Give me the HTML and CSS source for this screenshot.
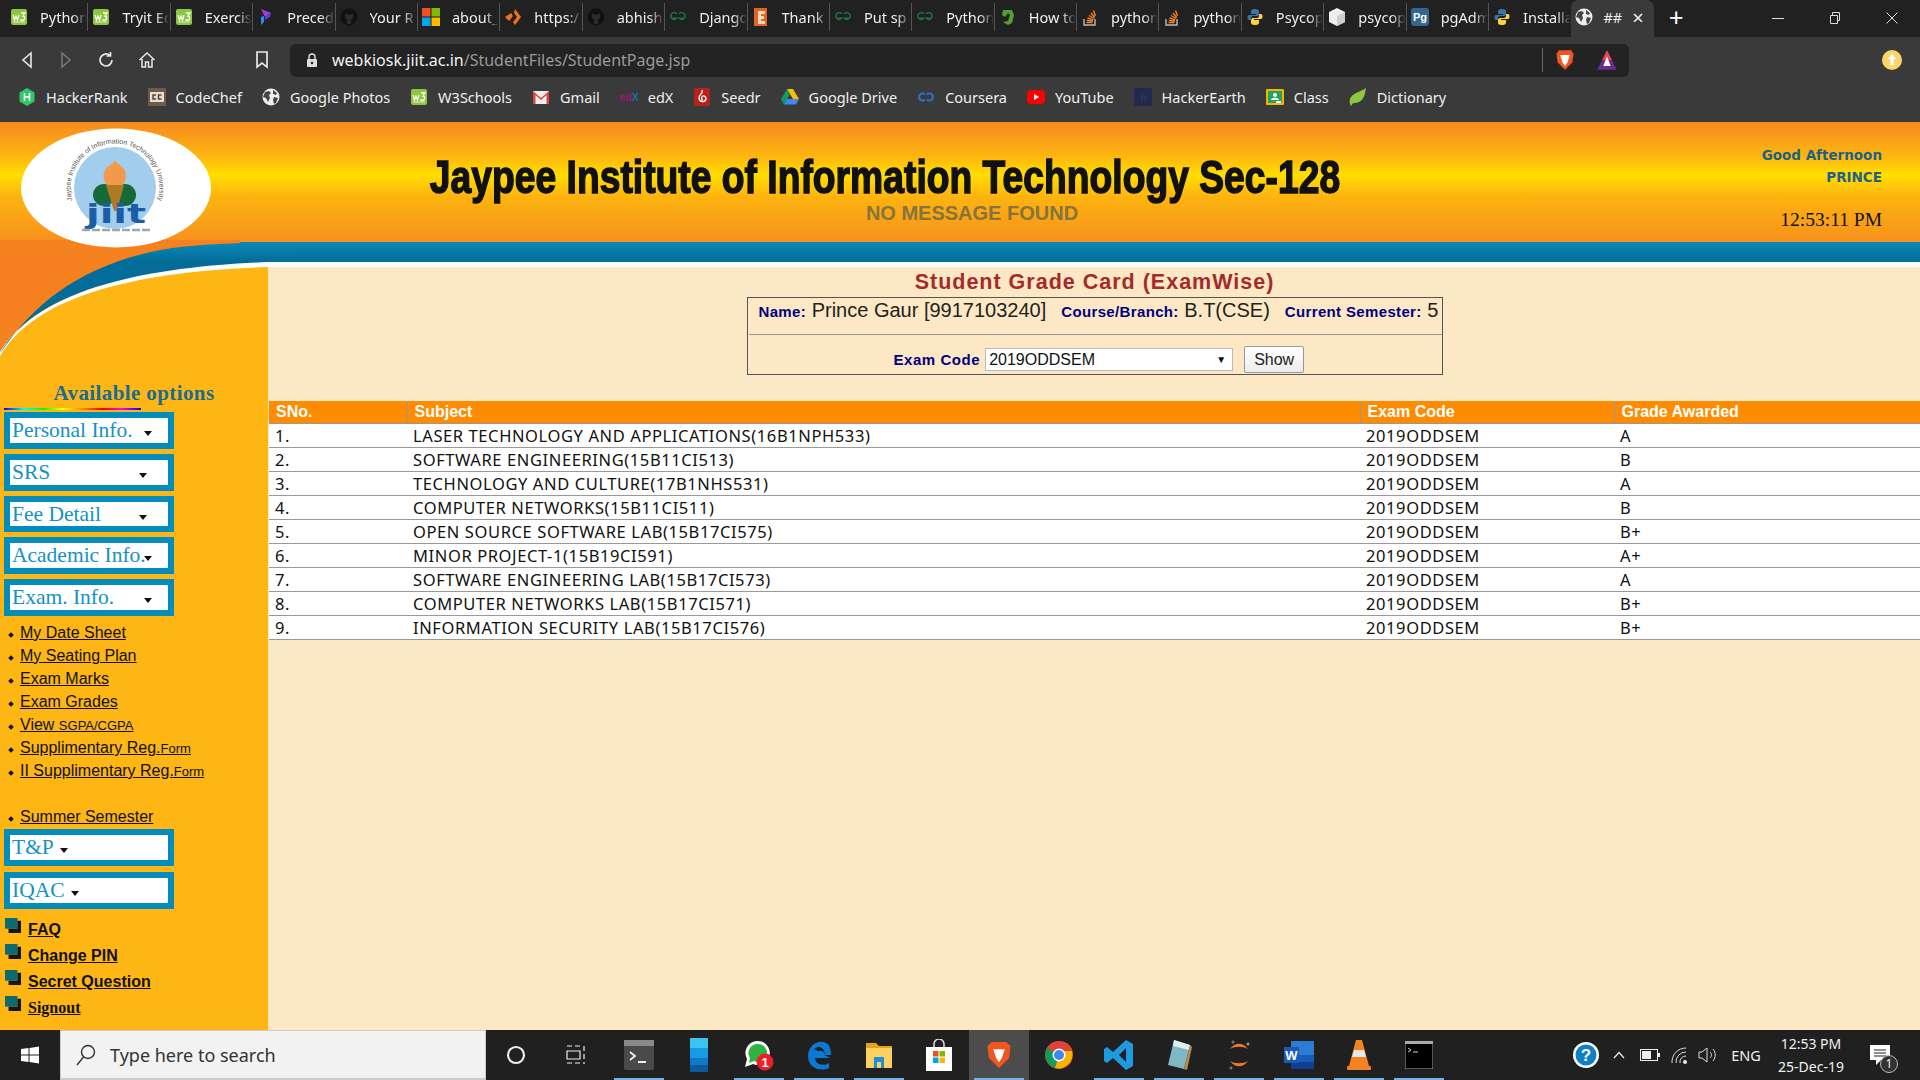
FILE: index.html
```html
<!DOCTYPE html>
<html lang="en">
<head>
    <meta charset="UTF-8">
    <title>Student Page</title>
    <link rel="stylesheet" href="styles.css">
</head>
<body>

<svg class="defs" width="0" height="0">
    <symbol id="i-w3" viewBox="0 0 18 18"><rect x="1" y="1" width="16" height="16" rx="2" fill="#8cc63f"/><path d="M3 7l1.500 5 1.500-4 1.500 4 1.500-5" fill="none" stroke="#fff" stroke-width="1.200"/><path d="M11 5h4l-2 3c2 0 2.500 4-.5 4.500-1 0-1.500-.5-2-1" fill="none" stroke="#fff" stroke-width="1.300"/><path d="M3 14h12" stroke="#fff" stroke-width=".7"/></symbol>
    <symbol id="i-prec" viewBox="0 0 18 18"><path d="M4 1l10 4-6 4z" fill="#a93ae0"/><path d="M8 9l6-4-1 4-5 3z" fill="#5b3ce0"/><path d="M4 9v8l3-3V8z" fill="#2a8fe8"/></symbol>
    <symbol id="i-gh" viewBox="0 0 18 18"><circle cx="9" cy="9" r="8.500" fill="#111"/><path d="M5 5l2 1.500h4L13 5v4c0 2-1.500 3-4 3s-4-1-4-3zM7 12v4h4v-4z" fill="#2c2c2c"/></symbol>
    <symbol id="i-ms" viewBox="0 0 18 18"><rect x="0" y="0" width="8.500" height="8.500" fill="#f25022"/><rect x="9.500" y="0" width="8.500" height="8.500" fill="#7fba00"/><rect x="0" y="9.500" width="8.500" height="8.500" fill="#00a4ef"/><rect x="9.500" y="9.500" width="8.500" height="8.500" fill="#ffb900"/></symbol>
    <symbol id="i-kite" viewBox="0 0 18 18"><path d="M11 1l6 8-6 8-2-3 4-5-3-4zM7 5l2 3-4 5-4-4z" fill="#f2711c"/></symbol>
    <symbol id="i-gg" viewBox="0 0 18 18"><path d="M8 6C7 4 3 4 2 7c-1 4 4 6 6 3H4M10 6c1-2 5-2 6 1 1 4-4 6-6 3h4" fill="none" stroke="#1b7f46" stroke-width="1.200"/></symbol>
    <symbol id="i-e" viewBox="0 0 18 18"><rect x="2" y="0" width="13" height="18" fill="#e2622a"/><path d="M6 3h7v3H9v2h3v3H9v2h4v3H6z" fill="#f6dcb4"/></symbol>
    <symbol id="i-how" viewBox="0 0 18 18"><path d="M4 2h9l2 5-2 8-4 2-5-3 5-1 2-6-2-2-3 4-3-2z" fill="#5a9e2f"/></symbol>
    <symbol id="i-so" viewBox="0 0 18 18"><path d="M3 11v6h11v-6" fill="none" stroke="#bcbbbb" stroke-width="1.400"/><path d="M5.500 14.500h6M5.800 12.400l6 .6M6.500 10l5.700 1.800M8 7.500l5 3M10 5l3.700 4.500M12.500 2.500l2 5.500" stroke="#f48024" stroke-width="1.400"/></symbol>
    <symbol id="i-py" viewBox="0 0 18 18"><path d="M9 1C5 1 5 3 5 4v2h5v1H3C1 7 1 12 3 12h2v-2c0-1 1-2 2-2h4c1 0 2-1 2-2V3c0-1-1-2-4-2z" fill="#3776ab"/><path d="M9 17c4 0 4-2 4-3v-2H8v-1h7c2 0 2-5 0-5h-2v2c0 1-1 2-2 2H7c-1 0-2 1-2 2v3c0 1 1 2 4 2z" fill="#ffd43b"/></symbol>
    <symbol id="i-cube" viewBox="0 0 18 18"><path d="M9 0l8 4v10l-8 4-8-4V4z" fill="#eee"/><path d="M9 8l8-4v10l-8 4z" fill="#cfcfcf"/></symbol>
    <symbol id="i-globe" viewBox="0 0 18 18"><circle cx="9" cy="9" r="8.500" fill="#eee"/><path d="M3 4l4-1 2 2-2 2 1 3-2 4-2-4-3-1zM11 2l4 3-1 2-3-1zM12 9l4 1-2 5-2 1-1-4z" fill="#444"/></symbol>
    <symbol id="i-hr" viewBox="0 0 18 18"><path d="M9 0l7.500 4.500v9L9 18l-7.500-4.500v-9z" fill="#2ec866"/><path d="M6.500 5v8M11.500 5v8M6.500 9h5" stroke="#fff" stroke-width="1.600"/></symbol>
    <symbol id="i-cc" viewBox="0 0 18 18"><rect x="0" y="0" width="18" height="18" fill="#6f5b48"/><rect x="2" y="4" width="14" height="10" fill="#e4ded6"/><path d="M8 7H5v4h3M13.500 7h-3v4h3" fill="none" stroke="#5b4636" stroke-width="1.500"/></symbol>
    <symbol id="i-gmail" viewBox="0 0 18 18"><rect x="1" y="3" width="16" height="13" fill="#eee"/><path d="M1 16V3l8 7 8-7v13h-2.500V7L9 12 3.500 7v9z" fill="#d9483b"/></symbol>
    <symbol id="i-seedr" viewBox="0 0 18 18"><rect x="1" y="0" width="16" height="18" rx="2" fill="#b7231b"/><path d="M9 2c2 3-3 4-3 8 0 4 6 5 7 1 0-3-3-4-4-2-1 1 0 3 1 3" fill="none" stroke="#fff" stroke-width="1.300"/></symbol>
    <symbol id="i-drive" viewBox="0 0 18 18"><path d="M6 1h6l6 10h-6z" fill="#fbbc04"/><path d="M6 1l3 5-6 10.500-3-5.500z" fill="#0f9d58"/><path d="M3 16.500L6 11h12l-3 5.500z" fill="#4285f4"/></symbol>
    <symbol id="i-coursera" viewBox="0 0 18 18"><path d="M8 6.500a3.500 3.500 0 1 0 0 5M10 6.500a3.500 3.500 0 1 1 0 5" fill="none" stroke="#2a73cc" stroke-width="2"/></symbol>
    <symbol id="i-yt" viewBox="0 0 18 18"><rect x="0" y="2" width="18" height="14" rx="4" fill="#f00"/><path d="M7 6l5 3-5 3z" fill="#fff"/></symbol>
    <symbol id="i-he" viewBox="0 0 18 18"><rect x="0" y="0" width="18" height="18" fill="#23294a"/><path d="M8 5v9M11 8v6" stroke="#2f3a66"/></symbol>
    <symbol id="i-class" viewBox="0 0 18 18"><rect x="0" y="1" width="18" height="16" rx="1" fill="#f4b400"/><rect x="2" y="3" width="14" height="12" fill="#26a35a"/><circle cx="9" cy="7" r="2" fill="#fff"/><path d="M5 12c0-3 8-3 8 0z" fill="#fff"/><rect x="10" y="13" width="5" height="2" fill="#fff"/></symbol>
    <symbol id="i-leaf" viewBox="0 0 18 18"><path d="M17 0C16 6 15 15 5 15c-1 0-2 1-3 3-1-1-2-4-1-7 2-6 10-7 16-11z" fill="#8dc63f"/></symbol>
    <symbol id="i-brave" viewBox="0 0 18 18"><path d="M4 1h10l2 3-1 7-6 6-6-6-1-7z" fill="#f1561f"/><path d="M5 5h8l-2 6-2 3-2-3z" fill="#fff"/></symbol>
    <symbol id="i-bat" viewBox="0 0 18 18"><path d="M9 1l8 16H1z" fill="#6b2c8f"/><path d="M9 1l4 8H5z" fill="#ef4056"/><path d="M9 6l3 8H6z" fill="#fff"/></symbol>
    <symbol id="i-bullet" viewBox="0 0 18 18"><rect x="0" y="0" width="14" height="12" fill="#0d6a70"/><path d="M14 3h4v14H4v-5h10z" fill="#151515"/></symbol>
</svg>

<div class="tabstrip">
    <div class="tab"><svg class="fav"><use href="#i-w3"/></svg><span>Python</span></div>
    <div class="tab"><svg class="fav"><use href="#i-w3"/></svg><span>Tryit Ed</span></div>
    <div class="tab"><svg class="fav"><use href="#i-w3"/></svg><span>Exercis</span></div>
    <div class="tab"><svg class="fav"><use href="#i-prec"/></svg><span>Preced</span></div>
    <div class="tab"><svg class="fav"><use href="#i-gh"/></svg><span>Your R</span></div>
    <div class="tab"><svg class="fav"><use href="#i-ms"/></svg><span>about_</span></div>
    <div class="tab"><svg class="fav"><use href="#i-kite"/></svg><span>https:/</span></div>
    <div class="tab"><svg class="fav"><use href="#i-gh"/></svg><span>abhish</span></div>
    <div class="tab"><svg class="fav"><use href="#i-gg"/></svg><span>Django</span></div>
    <div class="tab"><svg class="fav"><use href="#i-e"/></svg><span>Thank</span></div>
    <div class="tab"><svg class="fav"><use href="#i-gg"/></svg><span>Put sp</span></div>
    <div class="tab"><svg class="fav"><use href="#i-gg"/></svg><span>Python</span></div>
    <div class="tab"><svg class="fav"><use href="#i-how"/></svg><span>How to</span></div>
    <div class="tab"><svg class="fav"><use href="#i-so"/></svg><span>python</span></div>
    <div class="tab"><svg class="fav"><use href="#i-so"/></svg><span>python</span></div>
    <div class="tab"><svg class="fav"><use href="#i-py"/></svg><span>Psycop</span></div>
    <div class="tab"><svg class="fav"><use href="#i-cube"/></svg><span>psycop</span></div>
    <div class="tab"><svg class="fav" viewBox="0 0 18 18"><rect width="18" height="18" rx="3" fill="#336791"/><text x="9" y="12.500" text-anchor="middle" class="svg-pg">Pg</text></svg><span>pgAdm</span></div>
    <div class="tab"><svg class="fav"><use href="#i-py"/></svg><span>Installa</span></div>
    <div class="tab tab-active"><svg class="fav"><use href="#i-globe"/></svg><span>##</span><b class="tab-x">&#215;</b></div>
    <div class="tab-new">+</div>
    <div class="winctl">
        <svg width="12" height="12" viewBox="0 0 12 12"><path d="M0 6.500h12" stroke="#ddd"/></svg>
        <svg width="12" height="12" viewBox="0 0 12 12"><path d="M1.500 3.500h7v8h-7zM3.500 3.500v-3h7v8h-2" fill="none" stroke="#ddd"/></svg>
        <svg width="12" height="12" viewBox="0 0 12 12"><path d="M.5.500l11 11M11.500.500l-11 11" stroke="#ddd"/></svg>
    </div>
</div>

<div class="toolbar">
    <div class="nav-btns">
        <svg width="16" height="18" viewBox="0 0 16 18"><path d="M12 2L4 9l8 7z" fill="none" stroke="#e8e8e8" stroke-width="1.600"/></svg>
        <svg width="16" height="18" viewBox="0 0 16 18"><path d="M4 2l8 7-8 7z" fill="none" stroke="#777" stroke-width="1.600"/></svg>
        <svg width="18" height="18" viewBox="0 0 18 18"><path d="M15 9a6 6 0 1 1-2-4.500M13.500 1v4h-4" fill="none" stroke="#e8e8e8" stroke-width="1.700"/></svg>
        <svg width="18" height="18" viewBox="0 0 18 18"><path d="M1.500 9L9 2l7.500 7M4 8v8h3.500v-5h3v5H14V8" fill="none" stroke="#e8e8e8" stroke-width="1.500"/></svg>
    </div>
    <svg class="star" width="14" height="18" viewBox="0 0 14 18"><path d="M2 1h10v15l-5-4-5 4z" fill="none" stroke="#e8e8e8" stroke-width="1.700"/></svg>
    <div class="address">
        <svg class="lock" width="12" height="15" viewBox="0 0 12 15"><path d="M3 6V4a3 3 0 0 1 6 0v2" fill="none" stroke="#ddd" stroke-width="1.400"/><rect x="1" y="6" width="10" height="8" rx="1" fill="#ddd"/><circle cx="6" cy="10" r="1.300" fill="#222"/></svg>
        <span class="url"><b>webkiosk.jiit.ac.in</b>/StudentFiles/StudentPage.jsp</span>
        <i class="addr-sep"></i>
        <svg class="fav addr-ico"><use href="#i-brave"/></svg>
        <svg class="fav addr-ico addr-bat"><use href="#i-bat"/></svg>
    </div>
    <svg class="update" width="20" height="20" viewBox="0 0 20 20"><circle cx="10" cy="10" r="10" fill="#f9d56e"/><path d="M10 4l4 5h-2.500v6h-3V9H6z" fill="#fff"/></svg>
</div>

<div class="bookmarks">
    <div class="bm"><svg class="fav"><use href="#i-hr"/></svg>HackerRank</div>
    <div class="bm"><svg class="fav"><use href="#i-cc"/></svg>CodeChef</div>
    <div class="bm"><svg class="fav"><use href="#i-globe"/></svg>Google Photos</div>
    <div class="bm"><svg class="fav"><use href="#i-w3"/></svg>W3Schools</div>
    <div class="bm"><svg class="fav"><use href="#i-gmail"/></svg>Gmail</div>
    <div class="bm"><svg class="fav" viewBox="0 0 18 18"><text x="9" y="12.500" text-anchor="middle" class="svg-edx">ed<tspan fill="#0075b4">X</tspan></text></svg>edX</div>
    <div class="bm"><svg class="fav"><use href="#i-seedr"/></svg>Seedr</div>
    <div class="bm"><svg class="fav"><use href="#i-drive"/></svg>Google Drive</div>
    <div class="bm"><svg class="fav"><use href="#i-coursera"/></svg>Coursera</div>
    <div class="bm"><svg class="fav"><use href="#i-yt"/></svg>YouTube</div>
    <div class="bm"><svg class="fav"><use href="#i-he"/></svg>HackerEarth</div>
    <div class="bm"><svg class="fav"><use href="#i-class"/></svg>Class</div>
    <div class="bm"><svg class="fav"><use href="#i-leaf"/></svg>Dictionary</div>
</div>

<div class="page">
    <div class="site-head">
        <div class="logo-cell">
            <svg class="logo" width="192" height="120" viewBox="0 0 192 120">
                <defs><path id="seal-arc" d="M54 77A44.400 44.400 0 1 1 136 77"/></defs>
                <ellipse cx="96" cy="60" rx="95" ry="59.500" fill="#fff"/>
                <circle cx="95" cy="60" r="41" fill="#a3cdec"/>
                <text class="seal-text"><textPath href="#seal-arc" startOffset="50%" text-anchor="middle">Jaypee Institute of Information Technology University</textPath></text>
                <ellipse cx="84" cy="67" rx="11" ry="11" fill="#156a3a"/>
                <ellipse cx="105" cy="67" rx="11" ry="11" fill="#156a3a"/>
                <path d="M86 57h18l-7 26h-3z" fill="#b07a24"/>
                <path d="M95 32c2 4 6 5 9 9 3 5 2 14-2 16H88c-4-2-6-10-3-15 2-4 8-5 10-10z" fill="#f09a4a"/>
                <text x="96" y="95" text-anchor="middle" textLength="60" lengthAdjust="spacingAndGlyphs" class="seal-jiit">jiit</text>
                <path d="M62 102h70" stroke="#9aa" stroke-width="2.500" stroke-dasharray="8 2"/>
            </svg>
        </div>
        <div class="head-mid">
            <h1 class="inst-name">Jaypee Institute of Information Technology Sec-128</h1>
            <div class="no-msg">NO MESSAGE FOUND</div>
        </div>
        <div class="greet">
            <div class="greet-line">Good Afternoon</div>
            <div class="greet-line">PRINCE</div>
            <div class="clock">12:53:11 PM</div>
        </div>
    </div>
    <div class="band"></div>

    <svg class="swoosh" width="300" height="120" viewBox="0 240 300 120">
        <defs>
            <linearGradient id="band-grad" gradientUnits="userSpaceOnUse" x1="0" y1="243" x2="0" y2="262">
                <stop offset="0" stop-color="#0a88b8"/><stop offset="1" stop-color="#036c98"/>
            </linearGradient>
        </defs>
        <path d="M0 240H240V360H0z" fill="#f6821f"/>
        <path d="M0 352C40 285 170 262 268 262V360H0z" fill="#fff"/>
        <path d="M0 360V356C30 305 110 272 268 267V360z" fill="#fdb614"/>
        <path d="M0 354C35 300 85 265 160 250 200 243 250 243 300 242V262H268C170 266 38 282 0 354z" fill="url(#band-grad)"/>
    </svg>

    <div class="main-row">
        <aside class="sidebar">
            <div class="avail">Available options</div>
            <div class="rainbow"></div>

            <div class="menu"><span class="menu-label col-a">Personal Info.</span><i class="caret"></i></div>
            <div class="menu"><span class="menu-label col-b">SRS</span><i class="caret"></i></div>
            <div class="menu menu-short"><span class="menu-label col-b">Fee Detail</span><i class="caret"></i></div>
            <div class="menu"><span class="menu-label col-a">Academic Info.</span><i class="caret"></i></div>
            <div class="menu"><span class="menu-label col-a">Exam. Info.</span><i class="caret"></i></div>

            <ul class="links">
                <li><a href="#">My Date Sheet</a></li>
                <li><a href="#">My Seating Plan</a></li>
                <li><a href="#">Exam Marks</a></li>
                <li><a href="#">Exam Grades</a></li>
                <li><a href="#">View <small>SGPA/CGPA</small></a></li>
                <li><a href="#">Supplimentary Reg.<small>Form</small></a></li>
                <li><a href="#">II Supplimentary Reg.<small>Form</small></a></li>
                <li class="links-gap"><a href="#">Summer Semester</a></li>
            </ul>

            <div class="menu menu-tp"><span class="menu-label">T&amp;P</span><i class="caret caret-near"></i></div>
            <div class="menu menu-tp"><span class="menu-label">IQAC</span><i class="caret caret-near"></i></div>

            <div class="foot-links">
                <div class="foot-link"><svg class="foot-ico"><use href="#i-bullet"/></svg><a href="#">FAQ</a></div>
                <div class="foot-link"><svg class="foot-ico"><use href="#i-bullet"/></svg><a href="#">Change PIN</a></div>
                <div class="foot-link"><svg class="foot-ico"><use href="#i-bullet"/></svg><a href="#">Secret Question</a></div>
                <div class="foot-link foot-serif"><svg class="foot-ico"><use href="#i-bullet"/></svg><a href="#">Signout</a></div>
            </div>
        </aside>

        <main class="content">
            <h2 class="card-title">Student Grade Card (ExamWise)</h2>
            <div class="info-box">
                <div class="info-row">
                    <span><label>Name:</label> Prince Gaur [9917103240]</span>
                    <span><label>Course/Branch:</label> B.T(CSE)</span>
                    <span><label>Current Semester:</label> 5</span>
                </div>
                <div class="exam-row">
                    <label>Exam Code</label>
                    <div class="select-box"><span>2019ODDSEM</span><span class="select-arrow">&#9660;</span></div>
                    <button class="show-btn">Show</button>
                </div>
            </div>

            <table class="grades">
                <thead>
                    <tr><th class="c-no">SNo.</th><th class="c-sub">Subject</th><th class="c-code">Exam Code</th><th>Grade Awarded</th></tr>
                </thead>
                <tbody>
                    <tr><td>1.</td><td>LASER TECHNOLOGY AND APPLICATIONS(16B1NPH533)</td><td>2019ODDSEM</td><td>A</td></tr>
                    <tr><td>2.</td><td>SOFTWARE ENGINEERING(15B11CI513)</td><td>2019ODDSEM</td><td>B</td></tr>
                    <tr><td>3.</td><td>TECHNOLOGY AND CULTURE(17B1NHS531)</td><td>2019ODDSEM</td><td>A</td></tr>
                    <tr><td>4.</td><td>COMPUTER NETWORKS(15B11CI511)</td><td>2019ODDSEM</td><td>B</td></tr>
                    <tr><td>5.</td><td>OPEN SOURCE SOFTWARE LAB(15B17CI575)</td><td>2019ODDSEM</td><td>B+</td></tr>
                    <tr><td>6.</td><td>MINOR PROJECT-1(15B19CI591)</td><td>2019ODDSEM</td><td>A+</td></tr>
                    <tr><td>7.</td><td>SOFTWARE ENGINEERING LAB(15B17CI573)</td><td>2019ODDSEM</td><td>A</td></tr>
                    <tr><td>8.</td><td>COMPUTER NETWORKS LAB(15B17CI571)</td><td>2019ODDSEM</td><td>B+</td></tr>
                    <tr><td>9.</td><td>INFORMATION SECURITY LAB(15B17CI576)</td><td>2019ODDSEM</td><td>B+</td></tr>
                </tbody>
            </table>
        </main>
    </div>
</div>

<div class="taskbar">
    <div class="start"><svg width="18" height="18" viewBox="0 0 18 18"><path d="M0 3l7.500-1v6.500H0zM8.500 2L18 .5v8H8.500zM0 9.500h7.500V16L0 15zM8.500 9.500H18v8L8.500 16z" fill="#fff"/></svg></div>
    <div class="search">
        <svg width="22" height="24" viewBox="0 0 22 24"><circle cx="13" cy="9" r="6.500" fill="none" stroke="#333" stroke-width="1.400"/><path d="M8.500 14L2 22" stroke="#333" stroke-width="1.400"/></svg>
        <span>Type here to search</span>
    </div>
    <div class="task-icons">
        <div class="ti"><svg width="20" height="20" viewBox="0 0 20 20"><circle cx="10" cy="10" r="8" fill="none" stroke="#eee" stroke-width="2.200"/></svg></div>
        <div class="ti ti-wide"><svg width="20" height="20" viewBox="0 0 20 20"><path d="M1 1h5M9 1h5M18 1v5M1 6h13v8H1zM18 9v5M1 18h5M9 18h5M18 17v2" fill="none" stroke="#eee" stroke-width="1.200"/></svg></div>
        <div class="ti ti-on"><svg width="30" height="30" viewBox="0 0 30 30"><rect width="30" height="30" rx="2" fill="#4a4a4a"/><rect width="30" height="6" fill="#8a8a8a"/><path d="M6 12l5 4-5 4M14 22h8" fill="none" stroke="#eee" stroke-width="1.800"/></svg></div>
        <div class="ti"><svg width="18" height="34" viewBox="0 0 18 34"><rect width="18" height="10" fill="#3cc4f0"/><rect y="10" width="18" height="10" fill="#1a9ae0"/><rect y="20" width="18" height="7" fill="#0f78c8"/><rect y="27" width="18" height="7" fill="#0c5a9c"/></svg></div>
        <div class="ti ti-on"><svg width="30" height="32" viewBox="0 0 30 32"><path d="M13 2a12 12 0 0 0-10 18L1 28l8-3a12 12 0 1 0 4-23z" fill="#fff"/><path d="M13 5a9 9 0 0 0-7 14l-1 5 5-2a9 9 0 1 0 3-17z" fill="#2fb344"/><circle cx="21" cy="23" r="8.500" fill="#ee1c25"/><text x="21" y="27.500" text-anchor="middle" class="svg-badge">1</text></svg></div>
        <div class="ti ti-on"><svg width="26" height="30" viewBox="0 0 26 30"><path d="M24 18H9c0 6 8 9 14 5v5c-9 4-21 0-21-12C2 5 13-1 20 3c4 2 5 7 5 12H9c1-5 9-6 10 0 0-5-3-8-6-8-2 0-4 1-5 2" fill="#0b78d4"/></svg></div>
        <div class="ti ti-on"><svg width="28" height="26" viewBox="0 0 28 26"><path d="M1 1h10l3 3h13v4H1z" fill="#e3a21a"/><rect x="1" y="6" width="26" height="20" fill="#fbd160"/><rect x="9" y="15" width="10" height="11" fill="#1d8fd8"/><rect x="12" y="20" width="4" height="6" fill="#fbd160"/></svg></div>
        <div class="ti"><svg width="26" height="32" viewBox="0 0 26 32"><rect y="8" width="26" height="24" fill="#fff"/><path d="M8 8V5a5 5 0 0 1 10 0v3" fill="none" stroke="#ddd" stroke-width="1.500"/><rect x="7" y="12" width="5.500" height="5.500" fill="#f25022"/><rect x="13.500" y="12" width="5.500" height="5.500" fill="#7fba00"/><rect x="7" y="18.500" width="5.500" height="5.500" fill="#00a4ef"/><rect x="13.500" y="18.500" width="5.500" height="5.500" fill="#ffb900"/></svg></div>
        <div class="ti ti-active"><svg width="26" height="32" viewBox="0 0 18 20"><path d="M4 1h10l3 3-1 8-7 7-7-7-1-8z" fill="#f1561f"/><path d="M5 6h8l-2 6-2 3-2-3z" fill="#fff"/></svg></div>
        <div class="ti"><svg width="28" height="28" viewBox="0 0 28 28"><circle cx="14" cy="14" r="14" fill="#db4437"/><path d="M14 14L2 7a14 14 0 0 0 8 20z" fill="#0f9d58"/><path d="M14 14l-4 13a14 14 0 0 0 17-17H14z" fill="#f4b400"/><path d="M3 6a14 14 0 0 1 24 2H14z" fill="#db4437"/><circle cx="14" cy="14" r="6.500" fill="#fff"/><circle cx="14" cy="14" r="5" fill="#4285f4"/></svg></div>
        <div class="ti ti-on"><svg width="30" height="32" viewBox="0 0 30 32"><path d="M22 1l7 4v22l-7 4L9 19l-6 5-3-2v-12l3-2 6 5zM22 9l-7 7 7 7z" fill="#1e9be0"/></svg></div>
        <div class="ti ti-on"><svg width="28" height="32" viewBox="0 0 28 32"><path d="M9 1l16 5-6 24L3 26z" fill="#7fb8c4"/><path d="M9 1l16 5-1 5L8 7z" fill="#dfeef2"/><path d="M19 30l6-24 2 2-5 23z" fill="#b68b47"/></svg></div>
        <div class="ti ti-on"><svg width="28" height="32" viewBox="0 0 28 32"><path d="M5 10c5-7 13-7 18 0-5-3-13-3-18 0zM5 22c5 7 13 7 18 0-5 3-13 3-18 0z" fill="#f37726"/><circle cx="8" cy="3" r="1.500" fill="#777"/><circle cx="23" cy="5" r="1.500" fill="#999"/><circle cx="6" cy="29" r="1.500" fill="#777"/></svg></div>
        <div class="ti ti-on"><svg width="30" height="28" viewBox="0 0 30 28"><rect x="7" width="23" height="28" rx="1" fill="#2b7cd3"/><rect x="7" y="14" width="23" height="7" fill="#185abd"/><rect x="7" y="21" width="23" height="7" fill="#103f91"/><rect y="6" width="15" height="16" fill="#1a5bb8"/><text x="7.500" y="18.500" text-anchor="middle" class="svg-word">W</text></svg></div>
        <div class="ti ti-on"><svg width="26" height="32" viewBox="0 0 26 32"><path d="M10 1h6l7 26H3z" fill="#f58220"/><path d="M8 11h10l2 7H6z" fill="#e8e8e8"/><rect x="1" y="27" width="24" height="4" rx="1" fill="#f58220"/></svg></div>
        <div class="ti ti-on"><svg width="28" height="28" viewBox="0 0 28 28"><rect width="28" height="28" fill="#000" stroke="#aaa"/><rect width="28" height="3" fill="#aaa"/><path d="M3 7l3 2-3 2M8 11h5" stroke="#ccc" fill="none"/></svg></div>
    </div>
    <div class="tray">
        <svg width="28" height="28" viewBox="0 0 28 28"><circle cx="14" cy="14" r="13" fill="#fff"/><circle cx="14" cy="14" r="10.500" fill="#0f7fc8"/><text x="14" y="20" text-anchor="middle" class="svg-help">?</text></svg>
        <svg width="12" height="8" viewBox="0 0 12 8"><path d="M1 7l5-5.500L11 7" fill="none" stroke="#eee" stroke-width="1.200"/></svg>
        <svg width="20" height="12" viewBox="0 0 20 12"><rect x=".5" y=".5" width="17" height="11" fill="none" stroke="#eee"/><rect x="2" y="2" width="9" height="8" fill="#eee"/><rect x="18" y="4" width="2" height="4" fill="#eee"/></svg>
        <svg width="18" height="18" viewBox="0 0 18 18"><path d="M2 17A14 14 0 0 1 16 2M6 17A10 10 0 0 1 16 6M10 17a6 6 0 0 1 6-7" fill="none" stroke="#ddd"/><circle cx="15" cy="16" r="2" fill="#eee"/></svg>
        <svg width="20" height="18" viewBox="0 0 20 18"><path d="M1 6h3l5-4v14l-5-4H1zM12 6c2 2 2 4 0 6M15 3c3 4 3 8 0 12" fill="none" stroke="#ddd"/></svg>
        <span class="lang">ENG</span>
        <div class="clock-tray"><div>12:53 PM</div><div>25-Dec-19</div></div>
        <div class="notif">
            <svg width="24" height="24" viewBox="0 0 24 24"><path d="M2 2h20v15h-9l-5 5v-5H2z" fill="#fff"/><path d="M6 7h12M6 10h12M6 13h12" stroke="#222"/></svg>
            <span class="notif-count">1</span>
        </div>
    </div>
</div>

</body>
</html>
```

FILE: styles.css
```css
* {
    box-sizing: border-box;
}

html, body {
    margin: 0;
    padding: 0;
    height: 100%;
    overflow: hidden;
}

body {
    display: flex;
    flex-direction: column;
    font-family: "Liberation Sans", Arial, sans-serif;
    background-color: #fce8c5;
}

.defs {
    position: absolute;
}

.fav {
    width: 18px;
    height: 18px;
    flex: none;
}

/* browser tabs */
.tabstrip {
    height: 37px;
    flex: none;
    display: flex;
    align-items: flex-start;
    background-color: #212121;
    padding-left: 6px;
    font-family: "Noto Sans", sans-serif;
    font-size: 14.5px;
    color: #eee;
}

.tab {
    width: 82.4px;
    height: 28px;
    margin-top: 3px;
    padding-left: 4px;
    flex: none;
    display: flex;
    align-items: center;
    gap: 12px;
    overflow: hidden;
    white-space: nowrap;
    border-right: 1px solid #555;
}

.tab span {
    overflow: hidden;
    flex: 1;
    -webkit-mask-image: linear-gradient(to right, #000 70%, transparent 100%);
    mask-image: linear-gradient(to right, #000 70%, transparent 100%);
}

.tab:nth-child(19) {
    border-right: none;
}

.tab-active {
    height: 37px;
    margin-top: 0;
    padding-bottom: 3px;
    gap: 10px;
    background-color: #3a3a3a;
    border-right: none;
    border-radius: 8px 8px 0 0;
}

.tab-active span {
    flex: none;
    -webkit-mask-image: none;
    mask-image: none;
}

.tab-x {
    font-weight: normal;
    font-size: 20px;
}

.tab-new {
    margin-left: 15px;
    margin-top: 2px;
    font-size: 26px;
    line-height: 30px;
    color: #fff;
}

.winctl {
    margin-left: auto;
    margin-top: 12px;
    display: flex;
    gap: 45px;
    padding-right: 22px;
    align-items: center;
}

/* address bar */
.toolbar {
    height: 46px;
    flex: none;
    display: flex;
    align-items: center;
    background-color: #3a3a3a;
    position: relative;
}

.nav-btns {
    width: 255px;
    padding-left: 19px;
    display: flex;
    gap: 23px;
    align-items: center;
}

.star {
    flex: none;
}

.address {
    width: 1339px;
    height: 33px;
    margin-left: 21px;
    padding-left: 16px;
    display: flex;
    align-items: center;
    background-color: #232323;
    border-radius: 6px;
    font-family: "Noto Sans", sans-serif;
    font-size: 16px;
    color: #9a9a9a;
}

.lock {
    margin-right: 14px;
}

.url b {
    font-weight: normal;
    color: #f2f2f2;
}

.addr-sep {
    width: 1px;
    height: 24px;
    margin-left: auto;
    margin-right: 11px;
    background-color: #666;
}

.addr-ico {
    width: 22px;
    height: 22px;
}

.addr-bat {
    margin-left: 20px;
    margin-right: 11px;
}

.update {
    margin-left: 253px;
}

/* bookmarks */
.bookmarks {
    height: 39px;
    flex: none;
    display: flex;
    align-items: center;
    padding: 0 0 12px 18px;
    gap: 20px;
    background-color: #3a3a3a;
    font-family: "Noto Sans", sans-serif;
    font-size: 14.5px;
    color: #f0f0f0;
}

.bm {
    display: flex;
    align-items: center;
    gap: 10px;
    white-space: nowrap;
}

/* page */
.page {
    flex: 1;
    min-height: 0;
    position: relative;
    display: flex;
    flex-direction: column;
}

.site-head {
    height: 120px;
    flex: none;
    display: flex;
    background: linear-gradient(to bottom, #f78a20 0%, #fdb90f 30%, #ffde00 44%, #fdb40f 62%, #f7911e 100%);
}

.logo-cell {
    width: 268px;
    flex: none;
    padding: 6px 0 0 20px;
    position: relative;
    z-index: 4;
}

.logo {
    display: block;
}

.seal-text {
    font-family: "Liberation Sans", sans-serif;
    font-size: 7px;
    fill: #555;
}

.seal-jiit {
    font-family: "DejaVu Sans", sans-serif;
    font-weight: bold;
    font-size: 26px;
    fill: #1b5ea8;
}

.head-mid {
    width: 1234px;
    flex: none;
    padding-top: 33px;
    text-align: center;
}

.inst-name {
    margin: 0;
    font-family: "Liberation Sans", Arial, sans-serif;
    font-weight: bold;
    font-size: 46px;
    line-height: 44px;
    color: #111;
    white-space: nowrap;
    transform: scaleX(.81);
    -webkit-text-stroke: 1.5px #111;
}

.no-msg {
    margin-top: 2px;
    padding-left: 174px;
    font-weight: bold;
    font-size: 20px;
    line-height: 24px;
    color: #86743a;
}

.greet {
    flex: 1;
    padding: 22px 38px 0 0;
    text-align: right;
}

.greet-line {
    font-family: "DejaVu Sans", sans-serif;
    font-weight: bold;
    font-size: 13.5px;
    line-height: 22px;
    color: #1f6085;
}

.clock {
    margin-top: 21px;
    font-family: "Liberation Serif", serif;
    font-size: 19.5px;
    line-height: 22px;
    color: #111;
}

.band {
    height: 25px;
    flex: none;
    background: linear-gradient(to bottom, #0a88b8 0, #036c98 20px, #fff 20px);
}

.swoosh {
    position: absolute;
    left: 0;
    top: 118px;
    z-index: 3;
}

.main-row {
    flex: 1;
    min-height: 0;
    display: flex;
}

/* left column */
.sidebar {
    width: 268px;
    flex: none;
    padding: 114px 0 0 4px;
    background-color: #fdb614;
}

.avail {
    width: 260px;
    text-align: center;
    font-family: "Liberation Serif", serif;
    font-weight: bold;
    font-size: 21px;
    line-height: 24px;
    letter-spacing: .4px;
    color: #1a6b91;
}

.rainbow {
    width: 137px;
    height: 2px;
    margin-top: 3px;
    margin-bottom: 2px;
    background: linear-gradient(to right, #00f, #0ff, #0f0, #ff0, #f80, #f00, #f0f, #00f);
}

.menu {
    width: 170px;
    height: 37px;
    margin-bottom: 5px;
    padding-left: 2px;
    display: flex;
    align-items: center;
    border: 6px solid #048cbb;
    background-color: #fff;
    font-family: "Liberation Serif", serif;
    font-size: 21.5px;
    color: #1592c5;
    white-space: nowrap;
}

.menu-short {
    height: 36px;
}

.menu-label {
    flex: none;
}

.col-a {
    width: 132px;
}

.col-b {
    width: 127px;
}

.caret {
    width: 0;
    height: 0;
    margin-top: 6px;
    border-left: 4.5px solid transparent;
    border-right: 4.5px solid transparent;
    border-top: 5px solid #111;
}

.caret-near {
    margin-left: 6px;
}

.links {
    margin: 3px 0 0;
    padding: 0 0 0 16px;
    list-style: none;
    font-size: 16px;
}

.links li {
    height: 23px;
    line-height: 23px;
    position: relative;
}

.links li::before {
    content: "";
    position: absolute;
    left: -11px;
    top: 12px;
    width: 4px;
    height: 4px;
    background-color: #111;
    transform: rotate(45deg);
}

.links a {
    color: #111;
}

.links small {
    font-size: 13px;
}

.links-gap {
    margin-top: 23px;
}

.menu-tp {
    margin-top: 1px;
    margin-bottom: 6px;
}

.foot-links {
    margin-top: 8px;
}

.foot-link {
    height: 26px;
    display: flex;
    align-items: center;
    gap: 6px;
    font-weight: bold;
    font-size: 16px;
}

.foot-link a {
    color: #111;
}

.foot-ico {
    width: 18px;
    height: 16px;
    margin-top: -8px;
    flex: none;
}

.foot-serif {
    font-family: "Liberation Serif", serif;
    font-size: 16px;
}

/* grade card */
.content {
    flex: 1;
    min-width: 0;
    padding-left: 1px;
    display: flex;
    flex-direction: column;
    align-items: center;
    background-color: #fce8c5;
}

.card-title {
    margin: 1px 0 0;
    font-size: 21.5px;
    line-height: 29px;
    letter-spacing: 1px;
    font-weight: bold;
    color: #a52a2a;
}

.info-box {
    width: 696px;
    height: 78px;
    border: 1px solid #555;
}

.info-row {
    height: 37px;
    padding: 1px 0 0 10px;
    margin-left: 1px;
    display: flex;
    align-items: baseline;
    gap: 15px;
    font-size: 20px;
    color: #222;
    border-bottom: 1px solid #999;
    white-space: nowrap;
}

.info-box label {
    font-size: 15px;
    font-weight: bold;
    letter-spacing: .35px;
    color: #000080;
}

.exam-row {
    padding-top: 11px;
    padding-left: 146px;
    display: flex;
    align-items: center;
}

.exam-row label {
    letter-spacing: .55px;
}

.select-box {
    width: 248px;
    height: 23px;
    margin-left: 5px;
    padding: 0 6px 0 3px;
    display: flex;
    align-items: center;
    justify-content: space-between;
    background-color: #fff;
    border: 1px solid #bbb;
    font-size: 16px;
    color: #111;
}

.select-arrow {
    font-size: 10px;
}

.show-btn {
    width: 60px;
    height: 27px;
    margin-left: 11px;
    padding: 0;
    font-family: "Liberation Sans", Arial, sans-serif;
    font-size: 16px;
    color: #222;
    background: linear-gradient(to bottom, #fff, #ececec);
    border: 1px solid #999;
    border-radius: 2px;
}

.grades {
    width: 100%;
    margin-top: 26px;
    border-collapse: collapse;
    table-layout: fixed;
    background-color: #fff;
}

.grades th {
    height: 22px;
    padding: 0 7px;
    text-align: left;
    font-size: 16px;
    font-weight: bold;
    color: #fff;
    background-color: #ff8c00;
    border-right: 1px solid #999;
    border-bottom: 1px solid #999;
}

.grades th:last-child {
    border-right: none;
}

.grades td {
    height: 24px;
    padding: 0 6px;
    font-family: "Noto Sans", sans-serif;
    font-size: 16.5px;
    letter-spacing: .6px;
    color: #111;
    border-bottom: 1px solid #999;
    white-space: nowrap;
}

.c-no {
    width: 138px;
}

.c-sub {
    width: 953px;
}

.c-code {
    width: 254px;
}

/* windows taskbar */
.taskbar {
    height: 50px;
    flex: none;
    display: flex;
    align-items: stretch;
    background-color: #202020;
}

.start {
    width: 60px;
    display: flex;
    align-items: center;
    justify-content: center;
}

.search {
    width: 426px;
    padding-left: 14px;
    display: flex;
    align-items: center;
    gap: 13px;
    background-color: #f2f2f2;
    border: 1px solid #ccc;
    border-bottom-width: 2px;
    font-family: "Noto Sans", sans-serif;
    font-size: 18px;
    color: #333;
}

.task-icons {
    display: flex;
}

.ti {
    width: 60px;
    display: flex;
    align-items: center;
    justify-content: center;
    position: relative;
}

.ti-wide {
    margin-right: 2.5px;
}

.ti-on::after,
.ti-active::after {
    content: "";
    position: absolute;
    left: 5px;
    right: 5px;
    bottom: 0;
    height: 2px;
    background-color: #6fb4ef;
}

.ti-active {
    background-color: #4c4c4c;
}

.tray {
    width: 340px;
    margin-left: auto;
    margin-right: 12px;
    display: grid;
    grid-template-columns: 35px 32px 29px 30px 28px 48px 82px 56px;
    align-items: center;
    justify-items: center;
    font-family: "Noto Sans", sans-serif;
    color: #f0f0f0;
}

.lang {
    font-size: 14.5px;
}

.clock-tray {
    text-align: center;
    font-size: 14px;
    line-height: 23px;
    white-space: nowrap;
}

.notif {
    position: relative;
    height: 24px;
}

.notif-count {
    position: absolute;
    right: -6px;
    bottom: -6px;
    width: 18px;
    height: 18px;
    border-radius: 50%;
    border: 1px solid #bbb;
    background-color: #333;
    text-align: center;
    font-size: 12px;
    line-height: 16px;
}

.svg-pg {
    font-family: "Liberation Sans", sans-serif;
    font-weight: bold;
    font-size: 11px;
    fill: #fff;
}

.svg-edx {
    font-family: "Liberation Sans", sans-serif;
    font-weight: bold;
    font-size: 11px;
    fill: #a3136f;
}

.svg-badge {
    font-family: "Liberation Sans", sans-serif;
    font-weight: bold;
    font-size: 13px;
    fill: #fff;
}

.svg-word {
    font-family: "Liberation Sans", sans-serif;
    font-weight: bold;
    font-size: 13px;
    fill: #fff;
}

.svg-help {
    font-family: "Liberation Sans", sans-serif;
    font-weight: bold;
    font-size: 17px;
    fill: #fff;
}
```
